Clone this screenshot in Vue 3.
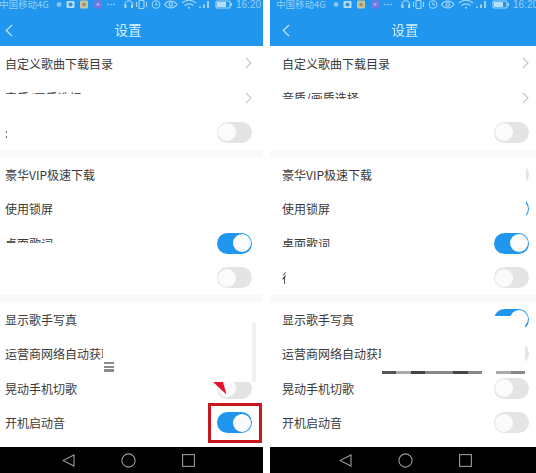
<template>
  <div class="page">
    <div class="screens">
      <div v-for="phone in phones" :key="phone.id" class="phone">
        <header class="header">
          <div class="status">
            <span class="carrier">中国移动4G</span>
            <svg class="notif" width="60" height="9" viewBox="0 0 60 9">
              <circle cx="3" cy="4.5" r="2.4" fill="#a9d6f5" />
              <rect x="10.5" y="1" width="8" height="7" rx="1" fill="#e6f4fc" />
              <circle cx="14.5" cy="4.5" r="2" fill="#3f8fc4" />
              <rect x="24" y="0.5" width="8" height="8" rx="1" fill="#f2d38a" />
              <rect x="26.5" y="3" width="3" height="3" fill="#d9822e" />
              <rect x="38" y="0.5" width="8" height="8" rx="1" fill="#8f6fd8" />
              <circle cx="42" cy="4.5" r="1.6" fill="#c9b6ee" />
              <circle cx="52" cy="4.5" r="0.8" fill="#cfe9fa" />
              <circle cx="55" cy="4.5" r="0.8" fill="#cfe9fa" />
              <circle cx="58" cy="4.5" r="0.8" fill="#cfe9fa" />
            </svg>
            <svg class="system" width="108" height="9" viewBox="0 0 108 9" fill="none" stroke="#d4edfc" stroke-width="1.1">
              <path d="M1 7V4.5a3.8 3.8 0 0 1 7.6 0V7" />
              <rect x="0.5" y="4.5" width="2" height="3.5" fill="#d4edfc" stroke="none" />
              <rect x="7" y="4.5" width="2" height="3.5" fill="#d4edfc" stroke="none" />
              <rect x="15" y="0.5" width="5" height="8" rx="0.8" />
              <path d="M12.5 2v5M22.5 2v5" />
              <circle cx="32" cy="4.5" r="3.8" />
              <path d="M32 2.5v2.2h1.8" />
              <path d="M40.5 4.5c3-4.5 9.5-4.5 12.5 0c-3 4.5-9.5 4.5-12.5 0z" />
              <circle cx="46.8" cy="4.5" r="1.7" />
              <path d="M58 3c4-3.6 10-3.6 14 0M60.5 5.5c2.5-2.2 6.5-2.200 9 0" />
              <circle cx="65" cy="7.7" r="1" fill="#d4edfc" stroke="none" />
              <path d="M76 8V6.5M80 8V4.5M84 8V1" stroke-width="1.8" />
              <rect x="92" y="1" width="14" height="7" rx="1" />
              <rect x="93" y="2" width="9" height="5" fill="#eaf6fd" stroke="none" />
              <rect x="106.5" y="3" width="1.5" height="3" fill="#d4edfc" stroke="none" />
            </svg>
            <span class="time">16:20</span>
          </div>
          <div class="titlebar">
            <svg class="back" width="8" height="13" viewBox="0 0 8 13" fill="none">
              <path d="M7 1L1.3 6.5L7 12" stroke="#bfe6fb" stroke-width="1.2" />
            </svg>
            <span class="title">设置</span>
          </div>
        </header>

        <section v-for="(group, g) in phone.groups" :key="g" class="group">
          <div v-for="row in group" :key="row.label" class="row">
            <span :class="['label', row.clip]">{{ row.label }}</span>
            <svg v-if="row.arrow" width="7" height="12" viewBox="0 0 7 12" fill="none">
              <path d="M1 1l5 5l-5 5" stroke="#c4c4c4" stroke-width="1.1" />
            </svg>
            <span v-else-if="row.toggle" :class="['toggle', row.toggle]"><i class="knob"></i></span>
          </div>
        </section>

        <nav class="navbar">
          <span class="nav-cell">
            <svg width="13" height="13" viewBox="0 0 13 13" fill="none"><path d="M12 1V12L1 6.5z" stroke="#9a9a9a" stroke-width="1.1" /></svg>
          </span>
          <span class="nav-cell">
            <svg width="15" height="15" viewBox="0 0 15 15" fill="none"><circle cx="7.5" cy="7.5" r="6.6" stroke="#9a9a9a" stroke-width="1.1" /></svg>
          </span>
          <span class="nav-cell">
            <svg width="13" height="13" viewBox="0 0 13 13" fill="none"><rect x="0.6" y="0.6" width="11.8" height="11.8" stroke="#9a9a9a" stroke-width="1.1" /></svg>
          </span>
        </nav>

        <!-- white retouching that sits over the screenshot -->
        <div v-for="c in phone.covers" :key="c" :class="['cover', c]"></div>
        <template v-if="phone.id === 'before'">
          <div class="menu-mark"></div>
          <svg class="arrow-tip" width="14" height="13" viewBox="0 0 14 13"><path d="M0 0H10L13.5 12.5z" fill="#e3112b" /></svg>
          <div class="red-box"></div>
        </template>
        <div v-else class="scan-line"></div>
      </div>
    </div>
  </div>
</template>

<script setup>
const makeGroups = (bootToggle, third, fourth) => [
  [
    { label: '自定义歌曲下载目录', arrow: true },
    { label: '音质/画质选择', arrow: true },
    { label: third.text, clip: third.cls, toggle: 'off' },
  ],
  [
    { label: '豪华VIP极速下载', toggle: 'off' },
    { label: '使用锁屏', toggle: 'on' },
    { label: '桌面歌词', toggle: 'on' },
    { label: fourth.text, clip: fourth.cls, toggle: 'off' },
  ],
  [
    { label: '显示歌手写真', toggle: 'on' },
    { label: '运营商网络自动获取', toggle: 'off' },
    { label: '晃动手机切歌', toggle: 'off' },
    { label: '开机启动音', toggle: bootToggle },
  ],
]

const phones = [
  {
    id: 'before',
    groups: makeGroups('on', { text: ':', cls: 'clip-dots' }, { text: ' ', cls: '' }),
    covers: ['l-quality', 'l-vip', 'l-lyric', 'l-big'],
  },
  {
    id: 'after',
    groups: makeGroups('off', { text: ' ', cls: '' }, { text: '待', cls: 'clip-half' }),
    covers: ['r-quality', 'r-vip', 'r-lyric', 'r-big'],
  },
]
</script>

<style scoped>
.page {
  width: 536px;
  height: 473px;
  overflow: hidden;
  background: #fff;
  font-family: "Noto Sans CJK SC", "Liberation Sans", sans-serif;
}

.screens {
  display: flex;
  gap: 7px;
  margin-left: -7px;
  filter: blur(0.4px);
}

.phone {
  position: relative;
  flex: 0 0 270px;
  height: 473px;
  display: flex;
  flex-direction: column;
  overflow: hidden;
  background: #f9f9f9;
}

.header {
  height: 46px;
  background: #2196ee;
  border-bottom: 1px solid #6fc3f4;
  flex: none;
}

.status {
  display: flex;
  align-items: center;
  height: 9px;
  padding-left: 6px;
  color: #93cff6;
  font-size: 9.5px;
  line-height: 9px;
  white-space: nowrap;
}

.status svg {
  opacity: 0.75;
}

.carrier {
  width: 51px;
}

.notif {
  margin-left: 6px;
}

.system {
  margin-left: 8px;
}

.time {
  margin-left: 4px;
  font-family: "Liberation Sans", sans-serif;
  font-size: 10px;
}

.titlebar {
  position: relative;
  height: 37px;
  padding-top: 2px;
  box-sizing: border-box;
  display: flex;
  align-items: center;
  justify-content: center;
}

.back {
  position: absolute;
  left: 12px;
  top: 15px;
}

.title {
  color: #d5f0ff;
  font-size: 13.5px;
}

.group {
  background: #fff;
  margin-bottom: 7.25px;
  flex: none;
}

.group:nth-of-type(1) {
  margin-top: -1px;
}

.group:nth-of-type(3) {
  margin-bottom: 0;
  flex: 1;
}

.row {
  height: 34.5px;
  display: flex;
  align-items: center;
  justify-content: space-between;
  padding: 0 11px 0 12px;
}

.label {
  color: #3a3a3a;
  font-size: 12px;
  white-space: nowrap;
}

.clip-dots {
  width: 2px;
  overflow: hidden;
}

.clip-half {
  width: 4px;
  overflow: hidden;
}

.toggle {
  position: relative;
  width: 35px;
  height: 21px;
  border-radius: 11px;
  flex: none;
}

.toggle.off {
  background: #e4e4e6;
}

.toggle.on {
  background: #2196ee;
}

.knob {
  position: absolute;
  top: 1.5px;
  width: 18px;
  height: 18px;
  border-radius: 50%;
  background: #fbfbfb;
}

.off .knob {
  left: 1px;
}

.on .knob {
  right: 1.5px;
}

.navbar {
  height: 26px;
  background: #000;
  display: flex;
  justify-content: center;
  align-items: center;
  flex: none;
}

.nav-cell {
  width: 60px;
  display: flex;
  justify-content: center;
}

.cover {
  position: absolute;
  background: #fff;
}

.l-quality {
  left: 0;
  top: 94px;
  width: 92px;
  height: 15px;
}

.l-vip {
  left: 222px;
  top: 157px;
  width: 39px;
  height: 69px;
}

.l-lyric {
  left: 0;
  top: 243px;
  width: 67px;
  height: 10px;
}

.l-big {
  left: 110px;
  top: 304px;
  width: 150px;
  height: 78px;
}

.l-big::after {
  content: "";
  position: absolute;
  right: -3px;
  top: 19px;
  bottom: 0;
  width: 4px;
  background: #f1f1f1;
}

.r-quality {
  left: 0;
  top: 99px;
  width: 92px;
  height: 10px;
}

.r-vip {
  left: 215px;
  top: 157px;
  width: 41px;
  height: 69px;
}

.r-lyric {
  left: 0;
  top: 247px;
  width: 67px;
  height: 6px;
}

.r-big {
  left: 111px;
  top: 316px;
  width: 144px;
  height: 55px;
}

.menu-mark {
  position: absolute;
  left: 111px;
  top: 362px;
  width: 10px;
  height: 10px;
  background: repeating-linear-gradient(#8c8c8c 0 2.5px, #fff 2.5px 3.7px);
}

.arrow-tip {
  position: absolute;
  left: 220px;
  top: 382px;
}

.red-box {
  position: absolute;
  left: 215px;
  top: 403px;
  width: 54px;
  height: 40px;
  box-sizing: border-box;
  border: 3px solid #c8171d;
}

.scan-line {
  position: absolute;
  left: 112px;
  top: 371px;
  width: 143px;
  height: 3px;
  background: linear-gradient(90deg,
    #555 0 14px, #aaa 14px 29px, #444 29px 43px, #888 43px 71px,
    #444 71px 86px, #888 86px 100px, #fff 100px 114px, #aaa 114px 129px, #888 129px 143px);
}
</style>
